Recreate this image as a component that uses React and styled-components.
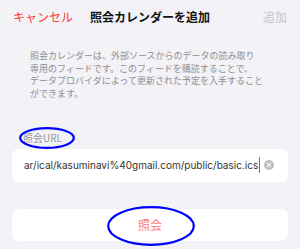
import React from 'react';
import styled, { createGlobalStyle } from 'styled-components';

const GlobalStyle = createGlobalStyle`
  html, body {
    margin: 0;
    padding: 0;
    background: #f2f2f7;
  }
  body {
    font-family: Inter, "Noto Sans CJK JP", sans-serif;
  }
`;

const Page = styled.div`
  width: 300px;
  height: 249px;
  background: #f2f2f7;
  overflow: hidden;
`;

const NavBar = styled.div`
  display: grid;
  grid-template-columns: 1fr auto 1fr;
  align-items: center;
  height: 32px;
  padding: 0 13px 0 13px;
  font-family: "Noto Sans CJK JP", sans-serif;
  font-size: 12px;
`;

const NavButton = styled.span`
  color: ${(p) => (p.disabled ? '#c4c4c7' : '#ff3b30')};
  justify-self: ${(p) => (p.right ? 'end' : 'start')};
`;

const Title = styled.span`
  color: #111;
  font-weight: 700;
`;

const Description = styled.p`
  margin: 18px 0 0;
  padding: 0 30px;
  font-family: "Noto Sans CJK JP", sans-serif;
  font-size: 9px;
  line-height: 12.7px;
  color: #8e8e93;
  white-space: nowrap;
`;

const Section = styled.div`
  padding: 0 12px;
`;

const LabelWrap = styled.div`
  position: relative;
  margin: 31px 0 5px 11px;
  height: 12px;
  display: flex;
  align-items: center;
`;

const Label = styled.span`
  font-family: "Noto Sans CJK JP", sans-serif;
  font-size: 10px;
  color: #98989d;
`;

const Mark = styled.svg`
  position: absolute;
  display: block;
  width: ${(p) => p.$w}px;
  height: ${(p) => p.$h}px;
  min-height: ${(p) => p.$h}px;
  overflow: visible;
  pointer-events: none;
`;

const Card = styled.div`
  display: flex;
  align-items: center;
  justify-content: ${(p) => (p.center ? 'center' : 'flex-start')};
  height: ${(p) => p.h}px;
  margin-top: ${(p) => p.top || 0}px;
  background: #fff;
  border-radius: 7px;
  padding: 0 12px;
  overflow: ${(p) => (p.clip ? 'hidden' : 'visible')};
`;

const UrlText = styled.span`
  font-family: Inter, "Noto Sans CJK JP", sans-serif;
  font-size: 10px;
  color: #333;
  white-space: nowrap;
`;

const Caret = styled.span`
  display: inline-block;
  width: 1.5px;
  height: 16px;
  background: #ff3b30;
  margin-left: 0.5px;
  flex-shrink: 0;
`;

const ClearIcon = styled.svg`
  margin-left: 4px;
  flex-shrink: 0;
`;

const ActionWrap = styled.div`
  position: relative;
  display: flex;
  align-items: center;
`;

const ActionText = styled.span`
  font-family: "Noto Sans CJK JP", sans-serif;
  font-size: 12px;
  color: #ff7a72;
`;

const Ellipse = ({ w, h, style }) => (
  <Mark $w={w} $h={h} viewBox={`0 0 ${w} ${h}`} style={style}>
    <ellipse
      cx={w / 2}
      cy={h / 2}
      rx={w / 2 - 1.2}
      ry={h / 2 - 1.2}
      fill="none"
      stroke="#0000ff"
      strokeWidth="2.2"
    />
  </Mark>
);

const App = () => {
  return (
    <Page>
      <GlobalStyle />
      <NavBar>
        <NavButton>キャンセル</NavButton>
        <Title>照会カレンダーを追加</Title>
        <NavButton right disabled>
          追加
        </NavButton>
      </NavBar>
      <Description>
        照会カレンダーは、外部ソースからのデータの読み取り
        <br />
        専用のフィードです。このフィードを購読することで、
        <br />
        データプロバイダによって更新された予定を入手すること
        <br />
        ができます。
      </Description>
      <Section>
        <LabelWrap>
          <Label>照会URL</Label>
          <Ellipse w={56} h={22} style={{ left: -4, top: -5 }} />
        </LabelWrap>
        <Card h={33} clip>
          <UrlText>ar/ical/kasuminavi%40gmail.com/public/basic.ics</UrlText>
          <Caret />
          <ClearIcon width="10" height="10" viewBox="0 0 10 10">
            <circle cx="5" cy="5" r="5" fill="#bdbdc2" />
            <path
              d="M3.3 3.3 L6.7 6.7 M6.7 3.3 L3.3 6.7"
              stroke="#fff"
              strokeWidth="1.1"
              strokeLinecap="round"
            />
          </ClearIcon>
        </Card>
        <Card h={32} top={27} center>
          <ActionWrap>
            <ActionText>照会</ActionText>
            <Ellipse w={88} h={40} style={{ left: -31, top: -10.5 }} />
          </ActionWrap>
        </Card>
      </Section>
    </Page>
  );
};

export default App;
